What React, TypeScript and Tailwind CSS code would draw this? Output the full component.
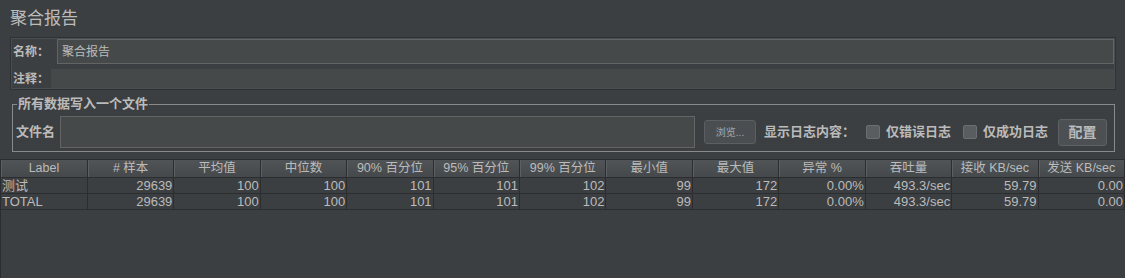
import React from 'react'

const font = { fontFamily: '"Liberation Sans", "Noto Sans CJK SC", sans-serif' }

const columns = [
  'Label',
  '# 样本',
  '平均值',
  '中位数',
  '90% 百分位',
  '95% 百分位',
  '99% 百分位',
  '最小值',
  '最大值',
  '异常 %',
  '吞吐量',
  '接收 KB/sec',
  '发送 KB/sec',
]

const rows = [
  ['测试', '29639', '100', '100', '101', '101', '102', '99', '172', '0.00%', '493.3/sec', '59.79', '0.00'],
  ['TOTAL', '29639', '100', '100', '101', '101', '102', '99', '172', '0.00%', '493.3/sec', '59.79', '0.00'],
]

function Checkbox({ label }: { label: string }) {
  return (
    <label className="flex items-center gap-[6px] shrink-0">
      <span className="w-[14px] h-[14px] rounded-[2px] bg-[#5a5d60] border border-[#6c6f71]" />
      <span className="text-[13px] font-bold text-[#bbbbbb]">{label}</span>
    </label>
  )
}

export default function App() {
  return (
    <div
      className="w-[1125px] h-[278px] bg-[#3c3f41] text-[#bbbbbb] overflow-hidden flex flex-col whitespace-nowrap"
      style={font}
    >
      {/* Title */}
      <div className="h-[37px] shrink-0 pl-[10px] pt-[8px] text-[17px] leading-[22px] text-[#bbbbbb]">聚合报告</div>

      {/* Name / comment panel */}
      <div className="ml-[10px] w-[1106px] h-[53px] shrink-0 border border-[#2f3234] outline outline-1 -outline-offset-2 outline-[#4a4d4f] flex flex-col pl-[1px] pr-[1px] pt-[1px]">
        <div className="flex items-center h-[25px]">
          <span className="w-[45px] shrink-0 pl-[1px] text-[12px] font-bold">名称：</span>
          <div className="flex-1 h-[25px] bg-[#45494a] border border-[#646464] flex items-center pl-[4px] text-[12px]">
            聚合报告
          </div>
        </div>
        <div className="flex items-center h-[19px] mt-[5px]">
          <span className="w-[39px] shrink-0 pl-[1px] text-[12px] font-bold">注释：</span>
          <div className="flex-1 h-[19px] bg-[#45494a]" />
        </div>
      </div>

      {/* Write results to file */}
      <fieldset className="ml-[12px] mt-[5px] w-[1103px] shrink-0 border border-[#8a8a8a] px-[2px] pb-[3px]">
        <legend className="ml-[2px] px-[1px] text-[13px] leading-[18px] font-bold">所有数据写入一个文件</legend>
        <div className="flex items-center pt-[3px]">
          <span className="w-[45px] shrink-0 pl-[1px] text-[13px] font-bold">文件名</span>
          <div className="w-[635px] shrink-0 h-[32px] bg-[#45494a] border border-[#646464]" />
          <button className="ml-[9px] shrink-0 w-[52px] h-[24px] rounded-[3px] bg-[#4a4e50] border border-[#5c5f61] text-[10px] text-[#a9a9a9]">
            浏览...
          </button>
          <span className="ml-[8px] shrink-0 text-[13px] font-bold">显示日志内容：</span>
          <div className="ml-[11px] shrink-0">
            <Checkbox label="仅错误日志" />
          </div>
          <div className="ml-[12px] shrink-0">
            <Checkbox label="仅成功日志" />
          </div>
          <button className="ml-[10px] shrink-0 w-[49px] h-[27px] rounded-[3px] bg-[#4c5052] border border-[#5e6163] text-[14px] font-bold text-[#bbbbbb]">
            配置
          </button>
        </div>
      </fieldset>

      {/* Results table */}
      <div className="mt-[7px] flex-1 border-t border-l border-[#2b2d2f]">
        <table className="w-full table-fixed border-collapse text-[13px]">
          <thead>
            <tr className="h-[17px]">
              {columns.map((c) => (
                <th
                  key={c}
                  className="p-0 font-normal text-center text-[12.5px] leading-[16px] bg-gradient-to-b from-[#505456] to-[#45494b] border-r border-b border-[#2b2d2f] shadow-[inset_1px_0_0_#5c6062]"
                >
                  {c}
                </th>
              ))}
            </tr>
          </thead>
          <tbody>
            {rows.map((r, i) => (
              <tr key={i} className="h-[16px]">
                {r.map((v, j) => (
                  <td
                    key={j}
                    className={
                      'p-0 leading-[15px] border-r border-b border-[#2b2d2f] bg-[#3c3f41] ' +
                      (j === 0 ? 'text-left pl-[1px]' : 'text-right pr-[1px]')
                    }
                  >
                    {v}
                  </td>
                ))}
              </tr>
            ))}
          </tbody>
        </table>
      </div>
    </div>
  )
}
